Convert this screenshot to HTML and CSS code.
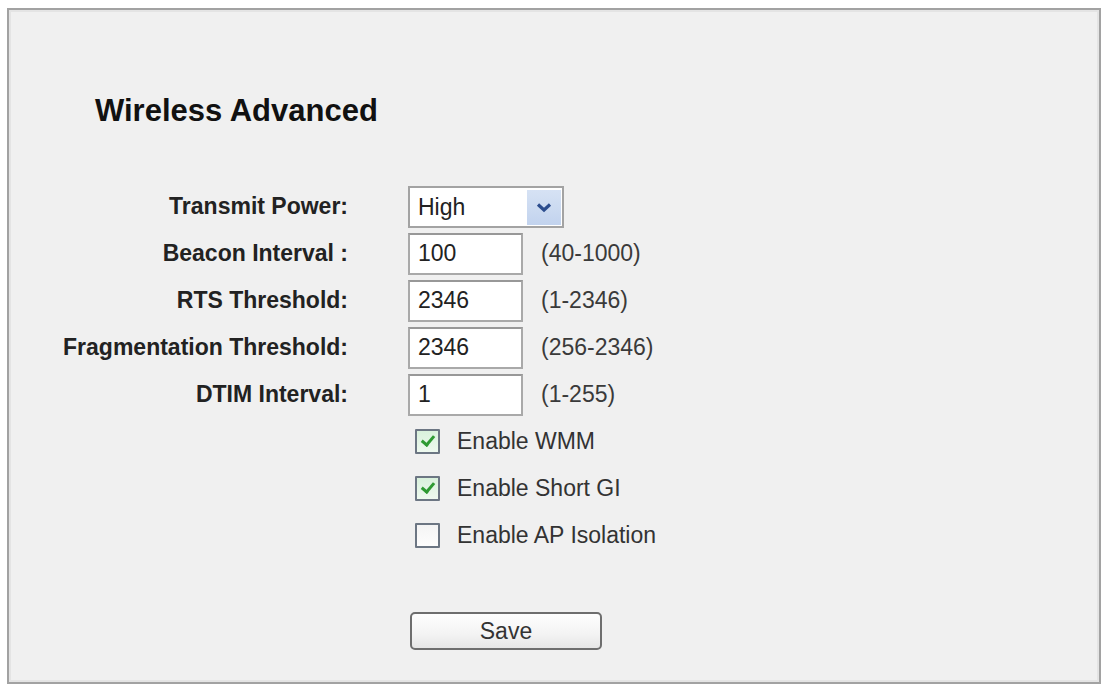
FILE: index.html
```html
<!DOCTYPE html>
<html lang="en"><head>
  <meta charset="UTF-8"/>
  <meta name="viewport" content="width=device-width,initial-scale=1"/>
  <title>Wireless Advanced</title>
  <link rel="stylesheet" href="styles.css">
</head><body>
  <div class="panel">
    <h1>Wireless Advanced</h1>

    <form class="form" onsubmit="return false">
      <label class="lbl" for="power">Transmit Power:</label>
      <div class="field">
        <div class="select">
          <select id="power">
            <option>High</option>
            <option>Middle</option>
            <option>Low</option>
          </select>
          <span class="arrow">
            <svg class="chev" width="16" height="11" viewBox="0 0 16 11"><path d="M2 2.5 L8 8 L14 2.5" fill="none" stroke="#2c4d8e" stroke-width="3.2"/></svg>
          </span>
        </div>
      </div>

      <label class="lbl" for="beacon">Beacon Interval :</label>
      <div class="field"><input class="txt" id="beacon" type="text" value="100"><span class="hint">(40-1000)</span></div>

      <label class="lbl" for="rts">RTS Threshold:</label>
      <div class="field"><input class="txt" id="rts" type="text" value="2346"><span class="hint">(1-2346)</span></div>

      <label class="lbl" for="frag">Fragmentation Threshold:</label>
      <div class="field"><input class="txt" id="frag" type="text" value="2346"><span class="hint">(256-2346)</span></div>

      <label class="lbl" for="dtim">DTIM Interval:</label>
      <div class="field"><input class="txt" id="dtim" type="text" value="1"><span class="hint">(1-255)</span></div>

      <label class="check"><input type="checkbox" checked><span>Enable WMM</span></label>
      <label class="check"><input type="checkbox" checked><span>Enable Short GI</span></label>
      <label class="check"><input type="checkbox"><span>Enable AP Isolation</span></label>

      <div class="actions"><button class="btn" type="submit">Save</button></div>
    </form>
  </div>
</body></html>
```

FILE: styles.css
```css
body {margin:0;background:#fff;font-family:"Liberation Sans",Arial,sans-serif;color:#222}

.panel {margin:8px 2px 6px 7px;padding:83px 0 29px;background:#f0f0f0;
        border:2px solid #a2a2a2;box-shadow:inset 0 0 0 2px #e4e4e4}
h1 {margin:0;padding-left:86px;font-size:31px;line-height:36px;font-weight:bold;color:#111}

.form {display:grid;grid-template-columns:339px auto;column-gap:60px;
       grid-auto-rows:47px;align-items:center;margin-top:54px}
.lbl {text-align:right;font-size:23px;font-weight:bold;color:#222}
.field {display:flex;align-items:center;gap:18px}
.hint {font-size:23px;color:#3a3a3a}

.txt {box-sizing:border-box;width:115px;height:42px;margin:0;padding:0 8px;
      border:2px solid #a9a9a9;border-top-color:#989898;background:#fff;
      font:23px "Liberation Sans",Arial,sans-serif;color:#222;outline:none}

.select {position:relative;width:156px;height:42px}
.select select {box-sizing:border-box;width:100%;height:100%;margin:0;padding:0 8px;
                appearance:none;-webkit-appearance:none;border:2px solid #a3a3a3;
                border-radius:0;background:#fff;font:23px "Liberation Sans",Arial,sans-serif;
                color:#222;outline:none}
.select .arrow {position:absolute;top:4px;right:3px;bottom:3px;width:34px;
                display:flex;align-items:center;justify-content:center;
                background:linear-gradient(#d6e2f4,#c2d3ee);pointer-events:none}
.chev {display:block;width:16px;height:11px;flex:none}

.check {grid-column:2;display:flex;align-items:center;gap:17px;font-size:23px;color:#333;padding-left:7px}
.check input {appearance:none;-webkit-appearance:none;box-sizing:border-box;width:25px;height:25px;
              margin:0;position:relative;border:2px solid #6c7683;border-radius:1px;
              background:linear-gradient(#f4f4f4,#fdfdfd)}
.check input:checked {background:linear-gradient(#d9f1dc,#eef9ef)}
.check input:checked::after {content:"";position:absolute;left:7px;top:2px;width:5px;height:10px;
                             border:solid #2e9a32;border-width:0 3px 3px 0;transform:rotate(40deg)}

.actions {grid-column:2;grid-row:span 2;align-self:end;padding:0 0 3px 2px}
.btn {display:block;box-sizing:border-box;width:192px;height:38px;margin:0;border:2px solid #6e6e6e;border-radius:5px;
      background:linear-gradient(#fefefe,#f3f3f3 60%,#e6e6e6);font:23px "Liberation Sans",Arial,sans-serif;
      color:#333;cursor:pointer}
```
